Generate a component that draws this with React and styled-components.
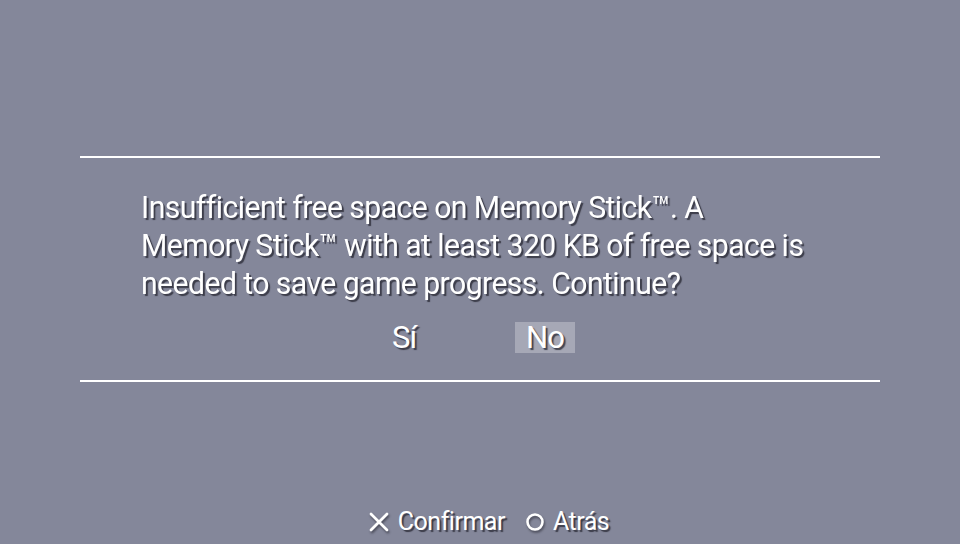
import React from "react";
import styled, { createGlobalStyle } from "styled-components";

//GLOBAL
const Global = createGlobalStyle`
  html, body {
    margin: 0;
    padding: 0;
    background: #84879a;
  }
  body {
    font-family: Roboto, "Noto Sans", sans-serif;
    color: #fff;
  }
`;

//APP
const App = () => {
  return (
    <Screen>
      <Global />
      <Dialog>
        <Message>
          Insufficient free space on Memory Stick™. A
          <br />
          Memory Stick™ with at least 320 KB of free space is
          <br />
          needed to save game progress. Continue?
        </Message>
        <Choices>
          <Choice>Sí</Choice>
          <Choice selected>No</Choice>
        </Choices>
      </Dialog>
      <Footer>
        <Hint>
          <svg width="22" height="22" viewBox="0 0 22 22">
            <path d="M3 3 L19 19 M19 3 L3 19" stroke="#fff" strokeWidth="2.8" strokeLinecap="round" />
          </svg>
          Confirmar
        </Hint>
        <Hint>
          <svg width="20" height="20" viewBox="0 0 20 20">
            <circle cx="10" cy="10" r="7.5" stroke="#fff" strokeWidth="2.6" fill="none" />
          </svg>
          Atrás
        </Hint>
      </Footer>
    </Screen>
  );
};

//SCREEN
const Screen = styled.div`
  width: 960px;
  height: 544px;
  display: flex;
  flex-direction: column;
  overflow: hidden;
`;

//DIALOG
const Dialog = styled.div`
  margin: 156px 80px 0;
  border-top: 2px solid #fff;
  border-bottom: 2px solid #fff;
  height: 226px;
  box-sizing: border-box;
  padding: 31px 0 0 61px;
`;

//MESSAGE
const Message = styled.div`
  font-size: 31px;
  line-height: 38px;
  letter-spacing: -0.6px;
  text-shadow: 2px 2px 1px rgba(35, 35, 45, 0.75);
  transform: scaleX(0.975);
  transform-origin: left;
  white-space: nowrap;
`;

//CHOICES
const Choices = styled.div`
  display: flex;
  gap: 88px;
  margin-top: 19px;
  margin-left: -61px;
  padding-left: 301px;
`;

const Choice = styled.div`
  font-size: 31px;
  line-height: 31px;
  padding: 0 11px;
  letter-spacing: -1px;
  background: ${(p) => (p.selected ? "#a6a8b6" : "transparent")};
  text-shadow: 2px 2px 1px rgba(35, 35, 45, 0.75);
`;

//FOOTER
const Footer = styled.div`
  margin-top: auto;
  margin-bottom: 8px;
  display: flex;
  justify-content: center;
  gap: 20px;
  padding-left: 17px;
`;

const Hint = styled.div`
  display: flex;
  align-items: center;
  gap: 8px;
  font-size: 25px;
  line-height: 28px;
  letter-spacing: -0.5px;
  text-shadow: 2px 2px 1px rgba(35, 35, 45, 0.75);
  svg {
    filter: drop-shadow(1px 2px 1px rgba(35, 35, 45, 0.6));
  }
`;

export default App;
